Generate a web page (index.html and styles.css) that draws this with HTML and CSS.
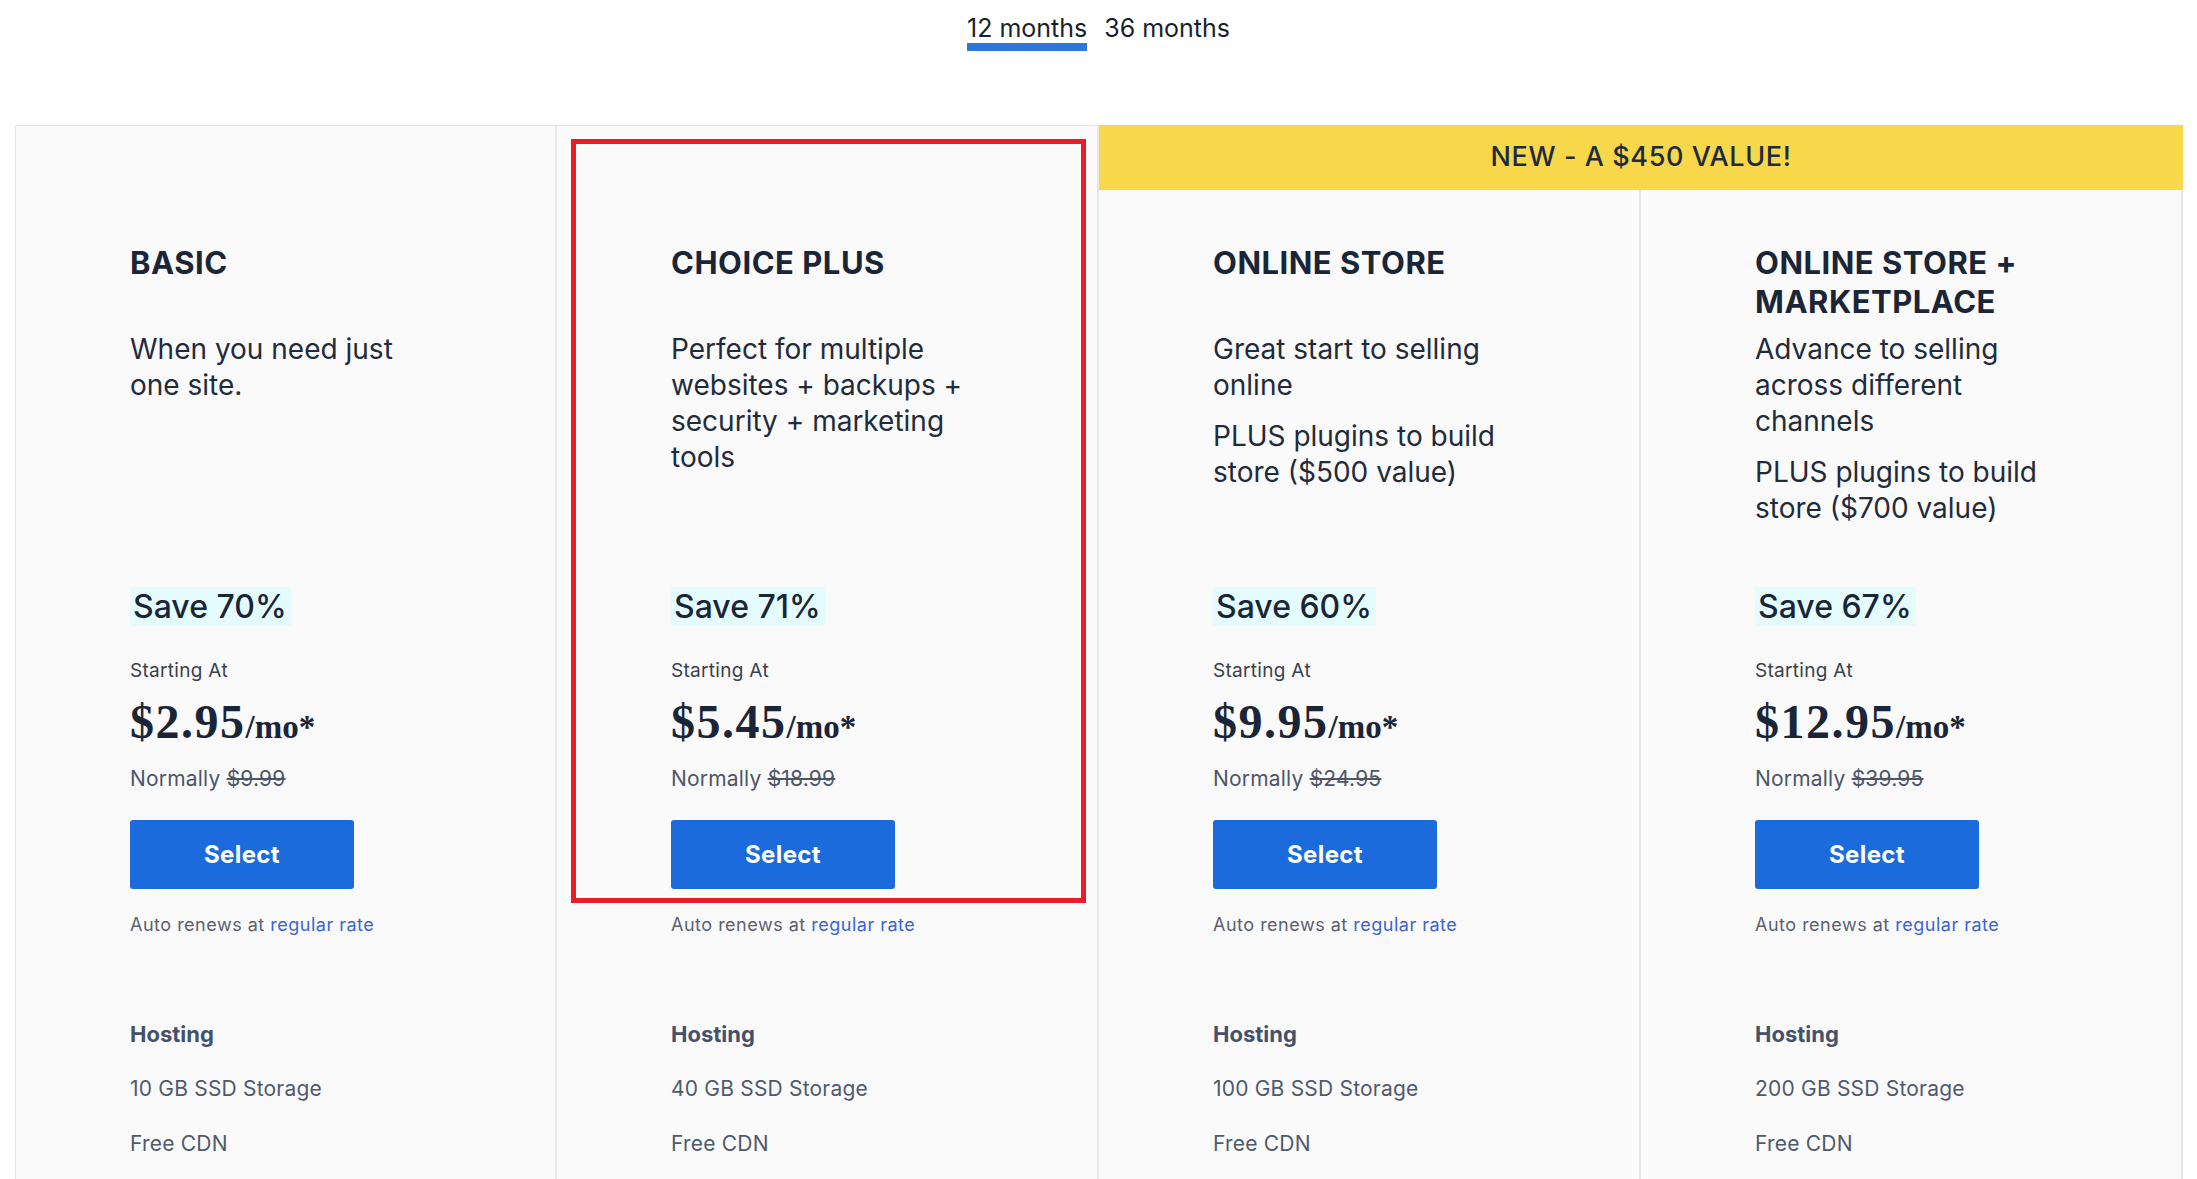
FILE: index.html
```html
<!DOCTYPE html>
<html lang="en">
<head>
<meta charset="utf-8">
<title>Plans</title>
<link rel="stylesheet" href="styles.css">
</head>
<body>
<div class="tabs">
  <span class="tab tab-active">12 months</span>
  <span class="tab">36 months</span>
</div>

<div class="plans">
  <div class="banner">NEW - A $450 VALUE!</div>

  <div class="plan plan-tall plan-first">
    <div class="plan-head">
      <h2 class="plan-name">BASIC</h2>
      <div class="plan-desc"><p>When you need just one site.</p></div>
    </div>
    <span class="save">Save 70%</span>
    <div class="starting">Starting At</div>
    <div class="price">$2.95<span class="per">/mo*</span></div>
    <div class="normally">Normally <s>$9.99</s></div>
    <a class="btn">Select</a>
    <div class="renew">Auto renews at <a class="link">regular rate</a></div>
    <div class="feat-title">Hosting</div>
    <div class="feat">10 GB SSD Storage</div>
    <div class="feat">Free CDN</div>
  </div>

  <div class="plan plan-tall">
    <div class="plan-head">
      <h2 class="plan-name">CHOICE PLUS</h2>
      <div class="plan-desc"><p>Perfect for multiple websites + backups + security + marketing tools</p></div>
    </div>
    <span class="save">Save 71%</span>
    <div class="starting">Starting At</div>
    <div class="price">$5.45<span class="per">/mo*</span></div>
    <div class="normally">Normally <s>$18.99</s></div>
    <a class="btn">Select</a>
    <div class="renew">Auto renews at <a class="link">regular rate</a></div>
    <div class="feat-title">Hosting</div>
    <div class="feat">40 GB SSD Storage</div>
    <div class="feat">Free CDN</div>
  </div>

  <div class="plan plan-c3">
    <div class="plan-head">
      <h2 class="plan-name">ONLINE STORE</h2>
      <div class="plan-desc"><p>Great start to selling online</p><p>PLUS plugins to build store ($500 value)</p></div>
    </div>
    <span class="save">Save 60%</span>
    <div class="starting">Starting At</div>
    <div class="price">$9.95<span class="per">/mo*</span></div>
    <div class="normally">Normally <s>$24.95</s></div>
    <a class="btn">Select</a>
    <div class="renew">Auto renews at <a class="link">regular rate</a></div>
    <div class="feat-title">Hosting</div>
    <div class="feat">100 GB SSD Storage</div>
    <div class="feat">Free CDN</div>
  </div>

  <div class="plan plan-c4">
    <div class="plan-head">
      <h2 class="plan-name">ONLINE STORE + MARKETPLACE</h2>
      <div class="plan-desc"><p>Advance to selling across different channels</p><p>PLUS plugins to build store ($700 value)</p></div>
    </div>
    <span class="save">Save 67%</span>
    <div class="starting">Starting At</div>
    <div class="price">$12.95<span class="per">/mo*</span></div>
    <div class="normally">Normally <s>$39.95</s></div>
    <a class="btn">Select</a>
    <div class="renew">Auto renews at <a class="link">regular rate</a></div>
    <div class="feat-title">Hosting</div>
    <div class="feat">200 GB SSD Storage</div>
    <div class="feat">Free CDN</div>
  </div>
</div>

<div class="annotation"></div>
</body>
</html>
```
FILE: styles.css
```css
* { box-sizing: border-box; }
html, body { margin: 0; padding: 0; }
body {
  background: #ffffff;
  font-family: Inter, "Noto Sans", "DejaVu Sans", sans-serif;
  color: #1e2839;
  overflow: hidden;
  position: relative;
  min-height: 1179px;
}

.tabs {
  display: flex;
  justify-content: center;
  gap: 17px;
  padding-top: 13px;
}
.tab {
  font-size: 25px;
  line-height: 30px;
  color: #1a1f2b;
  border-bottom: 8px solid transparent;
}
.tab-active { border-bottom-color: #2f76db; }

.plans {
  margin: 74px 14px 0 15px;
  display: grid;
  grid-template-columns: repeat(4, minmax(0, 1fr));
  grid-template-rows: 65px auto;
  height: 1100px;
}

.banner {
  grid-column: 3 / 5;
  grid-row: 1;
  background: #f9d74b;
  display: flex;
  align-items: center;
  justify-content: center;
  font-size: 27px;
  letter-spacing: 0.6px;
  font-weight: 500;
  color: #1e2a3f;
  padding-bottom: 2px;
}

.plan {
  background: #fafafa;
  border-right: 2px solid #e7e7e7;
  padding: 53px 20px 0 114px;
  display: flex;
  flex-direction: column;
  align-items: flex-start;
  grid-row: 2;
}
.plan-tall {
  grid-row: 1 / 3;
  border-top: 1px solid #e6e6e6;
  padding-top: 117px;
}
.plan-first { border-left: 1px solid #e6e6e6; grid-column: 1; }
.plan-c3 { grid-column: 3; }
.plan-c4 { grid-column: 4; }

.plan-head { height: 344px; }
.plan-name {
  margin: 0;
  font-size: 31px;
  line-height: 39px;
  font-weight: 700;
  letter-spacing: 0.5px;
  min-height: 78px;
  max-width: 400px;
  color: #1b2538;
}
.plan-desc {
  margin-top: 10px;
  max-width: 305px;
  font-size: 28px;
  line-height: 36px;
  font-weight: 400;
  color: #222b3b;
}
.plan-desc p { margin: 0 0 15px; }

.save {
  display: inline-block;
  background: #e4fcfd;
  font-size: 32px;
  line-height: 39px;
  font-weight: 500;
  padding: 0 4px 0 3px;
  color: #1b2538;
}

.starting {
  margin-top: 33px;
  font-size: 19px;
  letter-spacing: 0.3px;
  line-height: 24px;
  color: #3a404c;
}

.price {
  margin-top: 11px;
  font-family: "Liberation Serif", "Times New Roman", serif;
  font-weight: 700;
  font-size: 48px;
  letter-spacing: 1.5px;
  line-height: 56px;
  color: #1b2538;
}
.per {
  font-size: 33px;
  line-height: 1;
  letter-spacing: 0;
}

.normally {
  margin-top: 15px;
  font-size: 21px;
  letter-spacing: 0.2px;
  line-height: 28px;
  color: #4d5568;
}
.normally s { text-decoration-thickness: 1.5px; }

.btn {
  margin-top: 27px;
  width: 224px;
  height: 69px;
  border-radius: 3px;
  background: #1c6bdd;
  color: #ffffff;
  font-size: 24px;
  letter-spacing: 0.4px;
  font-weight: 700;
  display: flex;
  align-items: center;
  justify-content: center;
}

.renew {
  margin-top: 24px;
  font-size: 18px;
  letter-spacing: 0.5px;
  line-height: 24px;
  color: #5a6070;
}
.link { color: #3b64d7; }

.feat-title {
  margin-top: 83px;
  font-size: 22px;
  line-height: 28px;
  font-weight: 700;
  color: #45516a;
}
.feat {
  margin-top: 27px;
  font-size: 21px;
  letter-spacing: 0.2px;
  line-height: 28px;
  color: #4f596e;
}

.annotation {
  position: absolute;
  left: 571px;
  top: 139px;
  width: 515px;
  height: 764px;
  border: 5px solid #ed1c24;
  pointer-events: none;
}
```
